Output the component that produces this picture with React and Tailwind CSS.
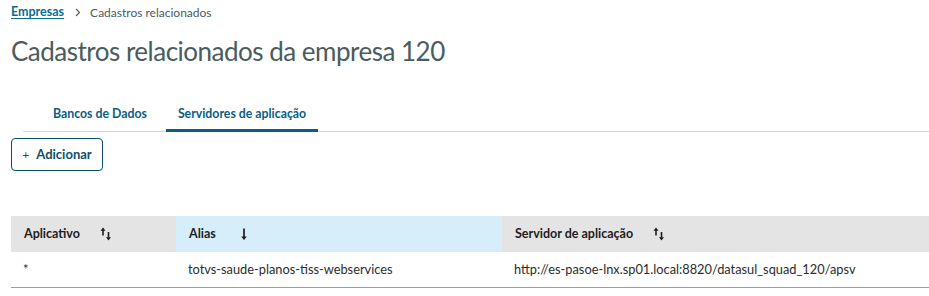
import { useState } from 'react';

function SortIcon() {
    return (
        <svg width="12" height="14" viewBox="0 0 12 14" className="text-[#1d1d1d]">
            {/* up arrow */}
            <path d="M3 0.5 L0.5 3.8 H2.2 V8.5 H3.8 V3.8 H5.5 Z" fill="currentColor" />
            {/* down arrow */}
            <path d="M8.5 13.5 L6 10.2 H7.7 V5 H9.3 V10.2 H11 Z" fill="currentColor" />
        </svg>
    );
}

function DownIcon() {
    return (
        <svg width="10" height="14" viewBox="0 0 10 14" className="text-[#1d1d1d]">
            <path d="M5 13 L2.2 9.4 H4.15 V1.5 H5.85 V9.4 H7.8 Z" fill="currentColor" />
        </svg>
    );
}

function Chevron() {
    return (
        <svg width="6" height="9" viewBox="0 0 6 9" className="text-[#4a5c60]">
            <path d="M1 1 L4.5 4.5 L1 8" fill="none" stroke="currentColor" strokeWidth="1.1" />
        </svg>
    );
}

export default function App() {
    const [tab, setTab] = useState(1);
    const tabs = ['Bancos de Dados', 'Servidores de aplicação'];

    const columns = [
        { label: 'Aplicativo', width: 'w-[165px]', icon: <SortIcon />, gap: 'gap-[20px]' },
        { label: 'Alias', width: 'w-[326px]', icon: <DownIcon />, active: true, gap: 'gap-[23px]' },
        { label: 'Servidor de aplicação', width: 'flex-1', icon: <SortIcon />, gap: 'gap-[20px]' },
    ];

    const rows = [
        ['*', 'totvs-saude-planos-tiss-webservices', 'http://es-pasoe-lnx.sp01.local:8820/datasul_squad_120/apsv'],
    ];

    return (
        <div className="min-h-[296px] w-[929px] bg-white pl-[11px] font-['Lato','Noto_Sans',sans-serif] text-[#1d1d1d]">
            {/* breadcrumb */}
            <div className="flex h-[24px] items-center pt-[1px] text-[12.5px]">
                <a href="#" className="font-bold text-[#0c6c94] underline underline-offset-2">
                    Empresas
                </a>
                <span className="ml-[11px] mr-[9px] flex items-center">
                    <Chevron />
                </span>
                <span className="text-[12px] text-[#4a5c60]">Cadastros relacionados</span>
            </div>

            {/* title */}
            <h1 className="mt-[12px] h-[30px] text-[26px] leading-[30px] font-normal tracking-[-0.5px] text-[#4a5c60]">
                Cadastros relacionados da empresa 120
            </h1>

            {/* tabs */}
            <div className="ml-[12px] mt-[31px] flex h-[35px] border-b border-[#d6d6d6]">
                {tabs.map((t, i) => (
                    <button
                        key={t}
                        onClick={() => setTab(i)}
                        className={`relative flex h-full items-center px-[12px] text-[12.3px] font-bold text-[#0c5d84] ${i === 0 ? 'ml-[18px]' : 'ml-[7px]'}`}
                    >
                        {t}
                        {tab === i && (
                            <span className="absolute bottom-[-1px] left-0 right-0 h-[3px] bg-[#0c5d84]" />
                        )}
                    </button>
                ))}
            </div>

            {/* add button */}
            <button className="mt-[6px] flex h-[33px] w-[92px] items-center justify-center gap-[7px] rounded-[4px] border border-[#0c4f6e] text-[13px] font-bold text-[#0c4f6e]">
                <span className="text-[12px] font-normal">+</span>
                Adicionar
            </button>

            {/* table */}
            <div className="mt-[45px] w-[918px]">
                <div className="flex h-[36px] bg-[#e4e4e4]">
                    {columns.map((c) => (
                        <div
                            key={c.label}
                            className={`flex items-center ${c.gap} px-[13px] text-[12.5px] font-bold ${c.width} ${c.active ? 'bg-[#d6edfa]' : ''}`}
                        >
                            {c.label}
                            {c.icon}
                        </div>
                    ))}
                </div>
                {rows.map((r, i) => (
                    <div key={i} className="flex h-[36px] border-b border-[#9e9e9e] text-[12.8px] text-[#2c2c2c]">
                        {r.map((cell, j) => (
                            <div key={j} className={`flex items-center px-[12px] ${columns[j].width}`}>
                                {cell}
                            </div>
                        ))}
                    </div>
                ))}
            </div>
        </div>
    );
}
